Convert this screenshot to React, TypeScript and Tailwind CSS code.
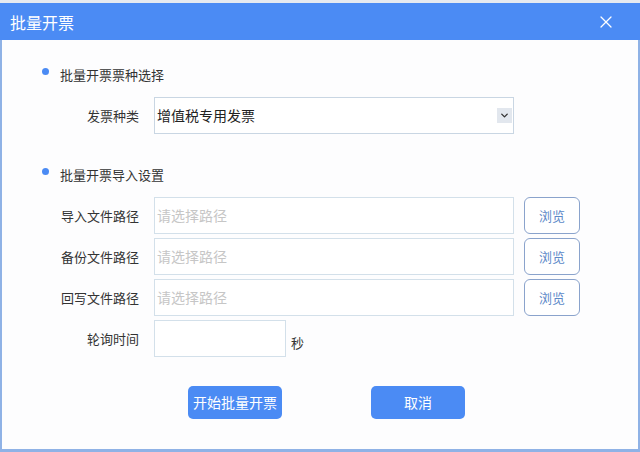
import { ChevronDown, X } from 'lucide-react';

const font = { fontFamily: '"Noto Sans CJK SC", "Noto Sans", sans-serif' };

function SectionTitle({ children }: { children: string }) {
  return (
    <div className="flex items-center h-[20px] pl-[40px]">
      <span className="w-[7px] h-[7px] rounded-full bg-[#4b8bf4] -mt-[8px]" />
      <span className="ml-[11px] text-[13px] text-[#333]">{children}</span>
    </div>
  );
}

function Label({ children }: { children: string }) {
  return (
    <div className="w-[137px] text-right text-[13px] text-[#333] leading-[20px]">{children}</div>
  );
}

function PathRow({ label }: { label: string }) {
  return (
    <div className="flex items-center h-[37px]">
      <Label>{label}</Label>
      <div className="ml-[15px] w-[360px] h-[37px] border border-[#d3e0ea] bg-white flex items-center pl-[2px] text-[14px] text-[#c6c6c6]">
        请选择路径
      </div>
      <button className="ml-[10px] w-[56px] h-[37px] rounded-[6px] border border-[#8aa3cc] bg-white text-[13px] text-[#5d89c8]">
        浏览
      </button>
    </div>
  );
}

export default function App() {
  return (
    <div className="w-[640px] h-[452px] bg-[#e6eaf0] pt-[3px] overflow-hidden" style={font}>
      <div className="h-[449px] flex flex-col border-x-2 border-b-[3px] border-[#8fb2e6] bg-[#fdfdfe]">
        {/* Header */}
        <div className="h-[37px] bg-[#4b8bf4] flex items-center justify-between pl-[10px] pr-[24px] -mx-[2px]">
          <span className="text-[16px] text-white">批量开票</span>
          <X className="w-[20px] h-[20px] text-white" strokeWidth={1.5} />
        </div>

        {/* Ticket type */}
        <div className="mt-[25px]">
          <SectionTitle>批量开票票种选择</SectionTitle>
        </div>
        <div className="mt-[12px] flex items-center h-[37px]">
          <Label>发票种类</Label>
          <div className="ml-[15px] w-[360px] h-[37px] border border-[#c9d6e3] bg-white flex items-center justify-between pl-[2px] pr-[1px]">
            <span className="text-[14px] text-[#222]">增值税专用发票</span>
            <span className="w-[15px] h-[15px] bg-[#e2e7ee] flex items-center justify-center">
              <ChevronDown className="w-[11px] h-[11px] text-[#333]" strokeWidth={3} />
            </span>
          </div>
        </div>

        {/* Import settings */}
        <div className="mt-[31px]">
          <SectionTitle>批量开票导入设置</SectionTitle>
        </div>
        <div className="mt-[12px] flex flex-col gap-[4px]">
          <PathRow label="导入文件路径" />
          <PathRow label="备份文件路径" />
          <PathRow label="回写文件路径" />
          <div className="flex items-center h-[37px]">
            <Label>轮询时间</Label>
            <div className="ml-[15px] w-[132px] h-[37px] border border-[#d3e0ea] bg-white" />
            <span className="ml-[5px] mt-[8px] text-[13px] text-[#333]">秒</span>
          </div>
        </div>

        {/* Actions */}
        <div className="mt-[29px] flex pl-[186px] gap-[89px]">
          <button className="w-[94px] h-[33px] rounded-[5px] bg-[#4b8bf4] text-white text-[14px]">开始批量开票</button>
          <button className="w-[94px] h-[33px] rounded-[5px] bg-[#4b8bf4] text-white text-[14px]">取消</button>
        </div>
      </div>
    </div>
  );
}
